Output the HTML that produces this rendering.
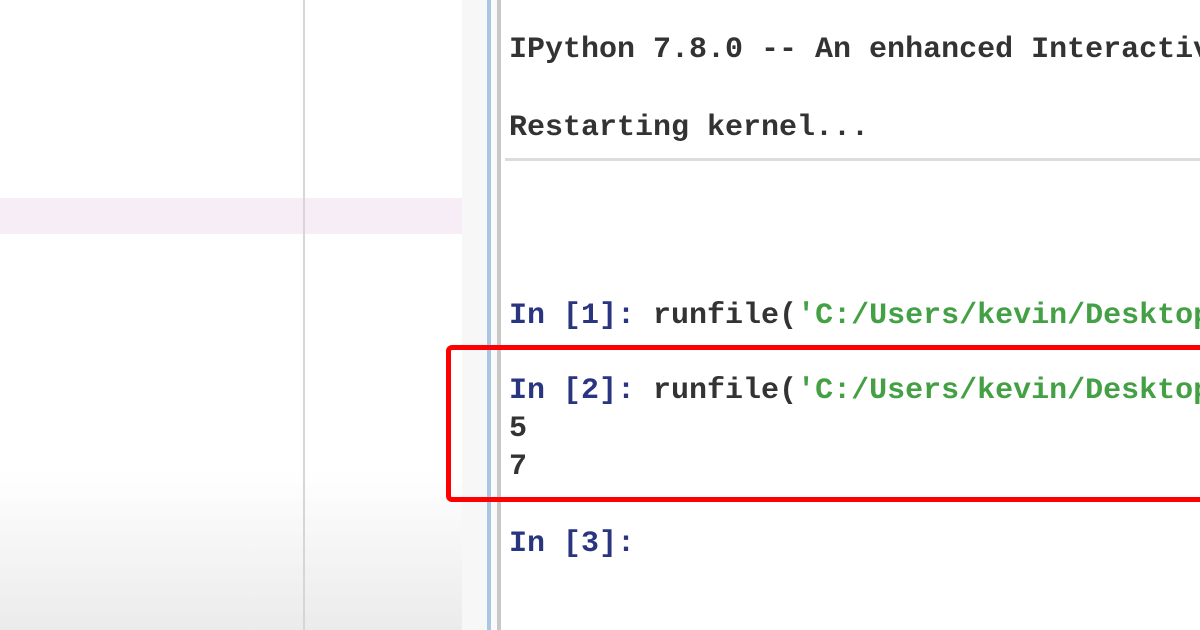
<!DOCTYPE html>
<html><head><style>
html,body{margin:0;padding:0;width:1200px;height:630px;overflow:hidden;background:#fff;}
body{position:relative;font-family:"Liberation Mono","DejaVu Sans Mono",monospace;}
.abs{position:absolute;}
.clip{position:absolute;left:0;top:0;width:1200px;height:630px;overflow:hidden;}
.t{position:absolute;left:509px;width:691px;overflow:hidden;font-size:30px;font-weight:bold;color:#333;white-space:pre;line-height:38px;}
.b{color:#2a3580;}
.g{color:#44a044;}
</style></head><body>
<div class="clip">
<div class="abs" style="left:0;top:470px;width:462px;height:160px;background:linear-gradient(#fff,#ebebeb);"></div>
<div class="abs" style="left:0;top:198px;width:462px;height:36px;background:#f6edf6;"></div>
<div class="abs" style="left:303px;top:0;width:2px;height:630px;background:#d6d6d6;"></div>
<div class="abs" style="left:462px;top:0;width:25px;height:630px;background:#f7f7f7;"></div>
<div class="abs" style="left:487px;top:0;width:4px;height:630px;background:#a9c6e2;"></div>
<div class="abs" style="left:491px;top:0;width:6px;height:630px;background:#fafafa;"></div>
<div class="abs" style="left:497px;top:0;width:4px;height:630px;background:#c8c8c8;"></div>
<div class="abs" style="left:505px;top:158px;width:695px;height:3px;background:#dcdcdc;"></div>
<div class="t" style="top:31px;">IPython 7.8.0 -- An enhanced Interactive</div>
<div class="t" style="top:109px;">Restarting kernel...</div>
<div class="t" style="top:297px;"><span class="b">In [1]:</span> runfile(<span class="g">'C:/Users/kevin/Desktop</span></div>
<div class="t" style="top:372px;"><span class="b">In [2]:</span> runfile(<span class="g">'C:/Users/kevin/Desktop</span></div>
<div class="t" style="top:410px;">5</div>
<div class="t" style="top:448px;">7</div>
<div class="t" style="top:525px;"><span class="b">In [3]:</span></div>
<div class="abs" style="left:446px;top:345px;width:780px;height:147px;border:5px solid #f00;border-radius:6px;box-sizing:content-box;"></div>
</div>
</body></html>
